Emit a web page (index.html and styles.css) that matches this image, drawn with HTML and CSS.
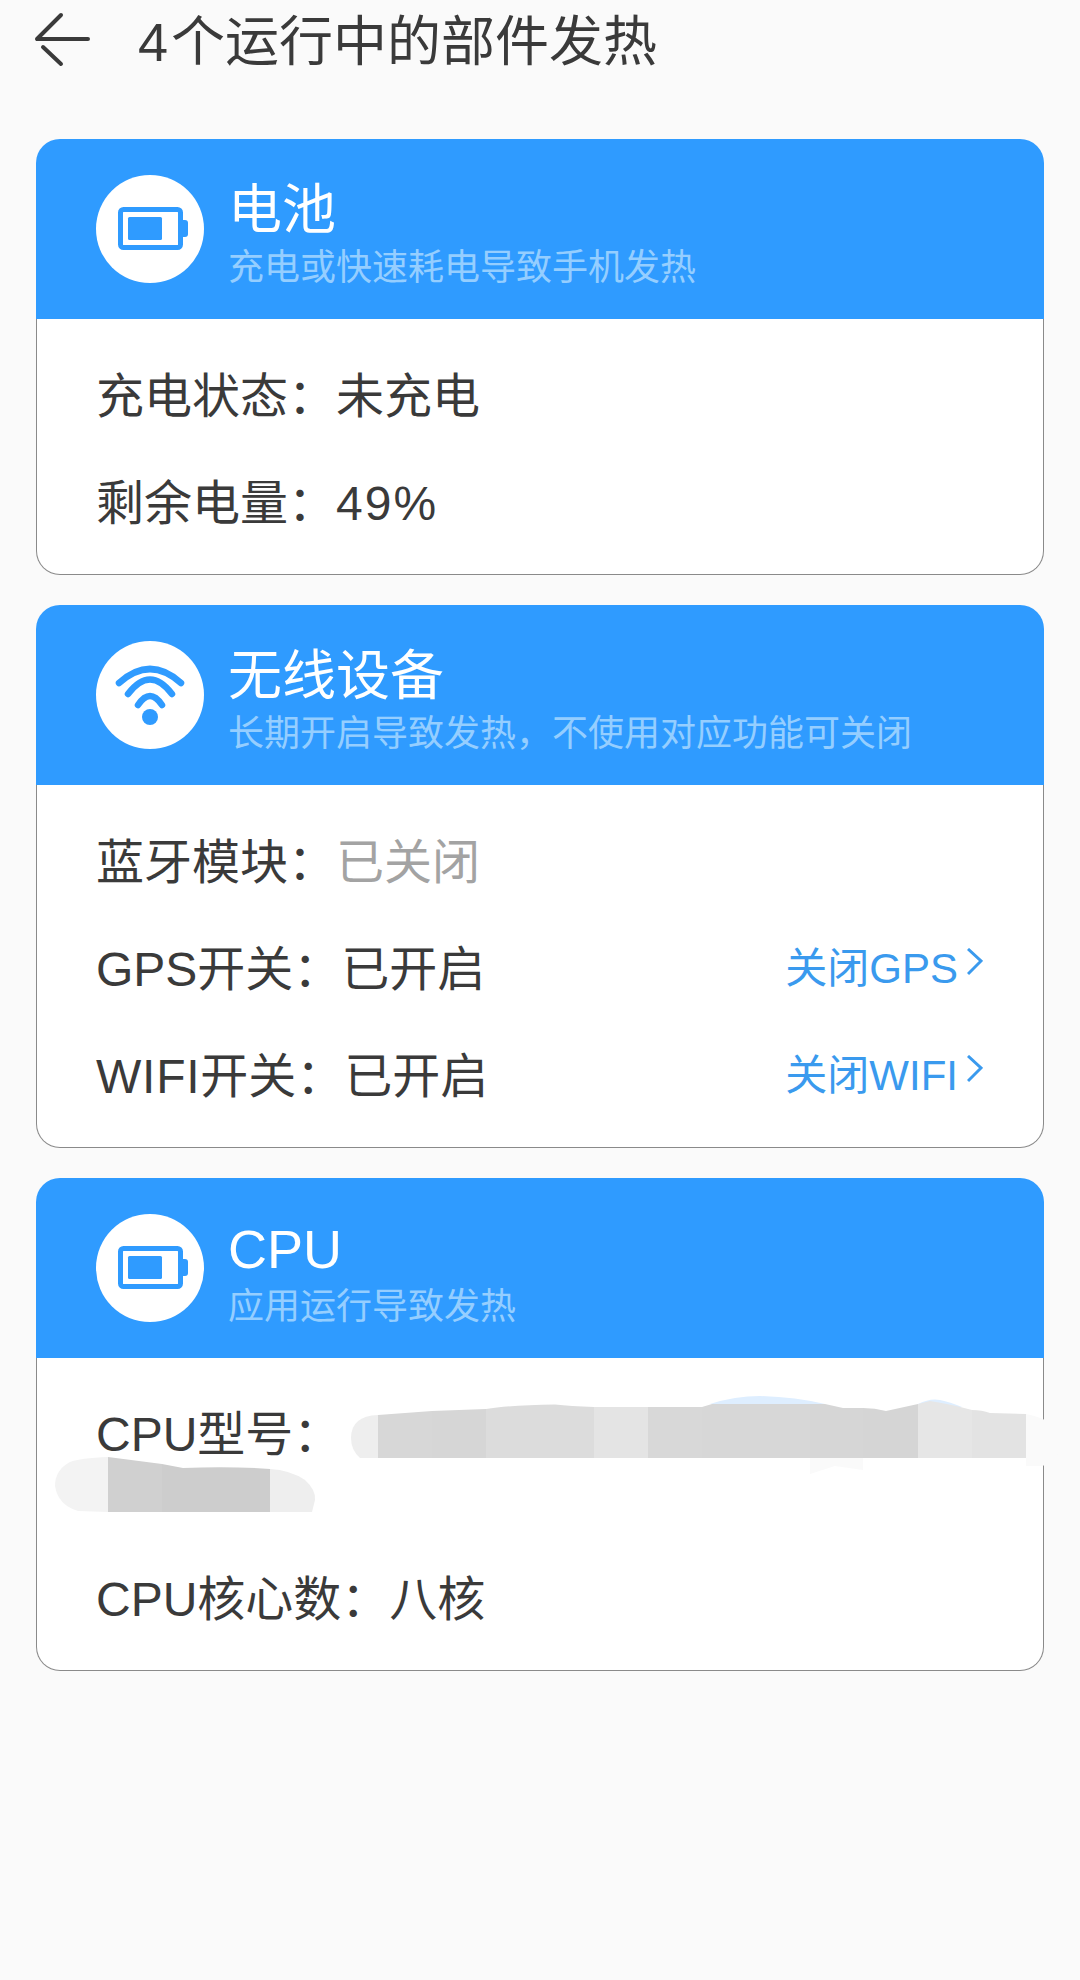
FILE: index.html
```html
<!DOCTYPE html>
<html lang="zh-CN">
<head>
<meta charset="utf-8">
<title>4个运行中的部件发热</title>
<link rel="stylesheet" href="styles.css">
</head>
<body>
<div class="page">
  <header class="topbar">
    <svg class="back" viewBox="0 0 64 56" aria-hidden="true"><path d="M1 24 25 0M7 32 25 49M1 24H52" transform="translate(0 3)"/></svg>
    <h1 class="title"><span class="num-lg">4</span>个运行中的部件发热</h1>
  </header>
  <main class="cards">
    <section class="card">
      <div class="card-head">
        <div class="badge">
          <svg viewBox="0 0 108 108" aria-hidden="true"><use href="#battery"/></svg>
        </div>
        <div class="head-text">
          <div class="head-title">电池</div>
          <div class="head-sub">充电或快速耗电导致手机发热</div>
        </div>
      </div>
      <div class="card-body">
        <div class="row"><span>充电状态：未充电</span></div>
        <div class="row"><span>剩余电量：<span class="num">49%</span></span></div>
      </div>
    </section>
    <section class="card">
      <div class="card-head">
        <div class="badge">
          <svg viewBox="0 0 108 108" aria-hidden="true">
            <circle class="ico-fill" cx="54" cy="76" r="8"/>
            <path class="ico-line" d="M23 42Q54 14 85 42M32 53Q54 24 76 53M42 64Q54 46 66 64"/>
          </svg>
        </div>
        <div class="head-text">
          <div class="head-title">无线设备</div>
          <div class="head-sub">长期开启导致发热，不使用对应功能可关闭</div>
        </div>
      </div>
      <div class="card-body">
        <div class="row"><span>蓝牙模块：<span class="muted">已关闭</span></span></div>
        <div class="row"><span>GPS开关：已开启</span><a class="link">关闭GPS<svg class="chev" viewBox="0 0 16 28" aria-hidden="true"><path d="M1 1 14 13 1 26"/></svg></a></div>
        <div class="row"><span><span class="wifi">WIFI</span>开关：已开启</span><a class="link">关闭WIFI<svg class="chev" viewBox="0 0 16 28" aria-hidden="true"><path d="M1 1 14 13 1 26"/></svg></a></div>
      </div>
    </section>
    <section class="card">
      <div class="card-head">
        <div class="badge">
          <svg viewBox="0 0 108 108" aria-hidden="true"><use href="#battery"/></svg>
        </div>
        <div class="head-text">
          <div class="head-title">CPU</div>
          <div class="head-sub">应用运行导致发热</div>
        </div>
      </div>
      <div class="card-body">
        <div class="row row-tall"><span>CPU型号：</span></div>
        <div class="row"><span>CPU核心数：八核</span></div>
      </div>
    </section>
  </main>
  <svg class="redact" viewBox="0 0 1080 1980" aria-hidden="true">
    <defs>
      <g id="battery">
        <rect class="ico-line-thin" x="24.5" y="34.5" width="60" height="38" rx="3"/>
        <rect class="ico-fill" x="32" y="42" width="34" height="23" rx="1.5"/>
        <path class="ico-fill" d="M87 45h2a3 3 0 0 1 3 3v11a3 3 0 0 1-3 3h-2z"/>
      </g>
    </defs>
    <path fill="#deeeff" d="M710 1404Q735 1396 760 1396Q795 1397 825 1404ZM918 1404Q930 1398 940 1400Q950 1402 962 1407L930 1410Z"/>
    <path fill="#fafafa" d="M810 1458H863V1470L835 1466 810 1474ZM1026 1414Q1058 1420 1060 1440Q1060 1462 1042 1466L1026 1466Z"/>
    <path fill="#eeeeee" d="M378 1415Q351 1416 351 1438Q351 1450 360 1458H378Z"/>
    <path fill="#d7d7d7" d="M378 1415 432 1411V1458H378Z"/>
    <path fill="#d6d6d6" d="M432 1411 486 1409V1458H432Z"/>
    <path fill="#dcdcdc" d="M486 1409Q510 1405 555 1404.500Q570 1406 594 1407V1458H486Z"/>
    <path fill="#e4e4e4" d="M594 1407H648V1458H594Z"/>
    <path fill="#d8d8d8" d="M648 1407H702V1458H648Z"/>
    <path fill="#d7d7d7" d="M702 1407 712 1404H810V1458H702Z"/>
    <path fill="#d6d6d6" d="M810 1404H825L843 1408H863V1458H810Z"/>
    <path fill="#d5d5d5" d="M863 1408Q875 1408 886 1411L918 1404V1458H863Z"/>
    <path fill="#e6e6e6" d="M918 1404 930 1401Q950 1404 972 1410V1458H918Z"/>
    <path fill="#e3e3e3" d="M972 1410Q982 1410 990 1413L1026 1414V1458H972Z"/>
    <path fill="#f3f3f3" d="M108 1457Q80 1458 70 1462Q55 1470 55 1486Q58 1505 78 1511L108 1512Z"/>
    <path fill="#d0d0d0" d="M108 1457 162 1464V1512H108Z"/>
    <path fill="#cdcdcd" d="M162 1464 183 1468Q230 1466 270 1469V1512H162Z"/>
    <path fill="#eeeeee" d="M270 1469Q290 1470 305 1480Q316 1490 315 1500L312 1512H270Z"/>
  </svg>
</div>
</body>
</html>
```
FILE: styles.css
```css
* { box-sizing: border-box; }
html, body { margin: 0; padding: 0; }
body {
  background: #fafafa;
  color: #3a3a3a;
  font-family: "Liberation Sans", "Noto Sans CJK SC", sans-serif;
  font-weight: 400;
}
.page {
  position: relative;
  width: 1080px;
  height: 1980px;
  padding: 0 36px;
  overflow: hidden;
}
.topbar {
  display: flex;
  align-items: center;
  height: 84px;
  margin-bottom: 55px;
}
.back {
  width: 64px;
  height: 56px;
  flex: none;
  overflow: visible;
  margin-top: -4px;
}
.back path {
  fill: none;
  stroke: #3a3a3a;
  stroke-width: 4;
  stroke-linecap: round;
  stroke-linejoin: round;
}
.title {
  margin: 0 0 0 38px;
  font-size: 54px;
  font-weight: 400;
  line-height: 84px;
}
.num-lg { letter-spacing: 3px; }
.num { letter-spacing: 2px; }
.wifi { letter-spacing: 0.75px; }
.cards {
  display: flex;
  flex-direction: column;
  gap: 30px;
}
.card-head {
  display: flex;
  align-items: center;
  gap: 24px;
  height: 180px;
  padding-left: 60px;
  background: #2f9bff;
  border-radius: 24px 24px 0 0;
  color: #fff;
}
.badge {
  width: 108px;
  height: 108px;
  border-radius: 50%;
  background: #fff;
  flex: none;
}
.badge svg { display: block; width: 108px; height: 108px; }
.ico-fill { fill: #2f9bff; }
.ico-line {
  fill: none;
  stroke: #2f9bff;
  stroke-width: 6.500;
  stroke-linecap: round;
}
.ico-line-thin {
  fill: none;
  stroke: #2f9bff;
  stroke-width: 5;
}
.head-text { display: flex; flex-direction: column; padding-top: 14px; }
.head-title { font-size: 54px; line-height: 64px; }
.head-sub { font-size: 36px; line-height: 52px; color: #95ceff; white-space: nowrap; }
.card-body {
  padding: 19px 59px 22px 59px;
  background: #fff;
  border: 1px solid #8a8a8a;
  border-top: 0;
  border-radius: 0 0 24px 24px;
}
.row {
  display: flex;
  justify-content: space-between;
  align-items: center;
  height: 107px;
  font-size: 48px;
}
.row-tall { height: 164px; align-items: flex-start; padding-top: 31px; line-height: 54px; }
.muted { color: #a3a3a3; }
.link {
  display: flex;
  align-items: center;
  gap: 9px;
  font-size: 42px;
  color: #3a9aee;
}
.chev {
  width: 16px;
  height: 28px;
  margin: 0 1px 6px 0;
}
.chev path {
  fill: none;
  stroke: #3a9aee;
  stroke-width: 3;
}
.redact {
  position: absolute;
  left: 0;
  top: 0;
  width: 1080px;
  height: 1980px;
  pointer-events: none;
}
```
